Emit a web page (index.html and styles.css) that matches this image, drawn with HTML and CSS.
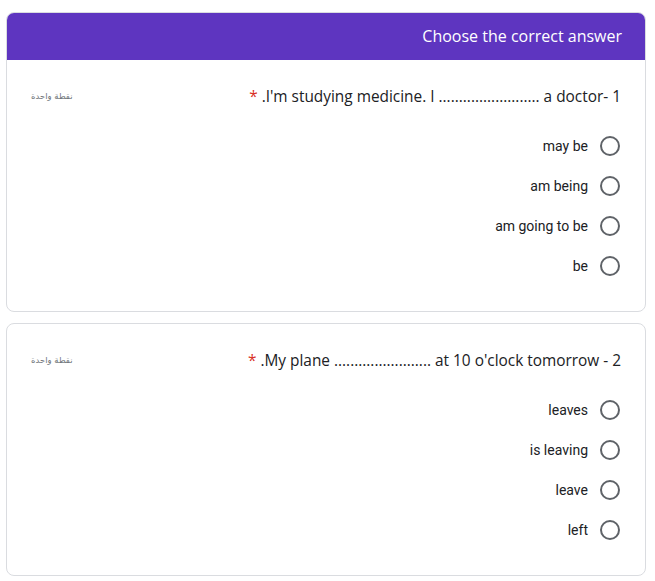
FILE: index.html
```html
<!DOCTYPE html>
<html lang="ar">
<head>
<meta charset="utf-8">
<title>Choose the correct answer</title>
<link rel="stylesheet" href="styles.css">
</head>
<body>
<div class="form">
  <section class="card card-first">
    <header class="card-header">Choose the correct answer</header>
    <div class="card-body">
      <div class="question-row">
        <span class="points">نقطة واحدة</span>
        <span class="question"><span class="req">*</span> .I'm studying medicine. I ......................... a doctor- 1</span>
      </div>
      <div class="options">
        <label class="option"><span class="opt-text">may be</span><span class="radio"></span></label>
        <label class="option"><span class="opt-text">am being</span><span class="radio"></span></label>
        <label class="option"><span class="opt-text">am going to be</span><span class="radio"></span></label>
        <label class="option"><span class="opt-text">be</span><span class="radio"></span></label>
      </div>
    </div>
  </section>
  <section class="card">
    <div class="card-body">
      <div class="question-row">
        <span class="points">نقطة واحدة</span>
        <span class="question"><span class="req">*</span> .My plane ........................ at 10 o'clock tomorrow - 2</span>
      </div>
      <div class="options">
        <label class="option"><span class="opt-text">leaves</span><span class="radio"></span></label>
        <label class="option"><span class="opt-text">is leaving</span><span class="radio"></span></label>
        <label class="option"><span class="opt-text">leave</span><span class="radio"></span></label>
        <label class="option"><span class="opt-text">left</span><span class="radio"></span></label>
      </div>
    </div>
  </section>
</div>
</body>
</html>
```
FILE: styles.css
```css
html, body {
  margin: 0;
  padding: 0;
  background: #ffffff;
}
body {
  font-family: "Open Sans", Roboto, Arial, sans-serif;
  color: #202124;
}
.form {
  margin: 12px 9px 0 6px;
  display: flex;
  flex-direction: column;
  gap: 11px;
}
.card {
  border: 1px solid #dadce0;
  border-radius: 8px;
  background: #fff;
  overflow: hidden;
}
.card-header {
  background: #5e35c0;
  color: #ffffff;
  height: 48px;
  margin: -1px -1px 0 -1px;
  padding: 0 24px;
  display: flex;
  align-items: center;
  justify-content: flex-end;
  font-size: 16px;
  font-family: "Open Sans", Roboto, sans-serif;
}
.card-body {
  padding: 24px 24px 25px 24px;
}
.question-row {
  display: flex;
  justify-content: space-between;
  align-items: center;
  height: 24px;
}
.points {
  font-family: "DejaVu Sans", "Noto Sans", sans-serif;
  font-size: 8.5px;
  color: #70757a;
  direction: rtl;
}
.question {
  font-size: 15.4px;
  color: #202124;
  white-space: nowrap;
}
.req {
  color: #d93025;
}
.options {
  margin-top: 18px;
  display: flex;
  flex-direction: column;
}
.option {
  height: 40px;
  display: flex;
  align-items: center;
  justify-content: flex-end;
  gap: 12px;
}
.opt-text {
  font-family: Roboto, Arial, sans-serif;
  font-size: 14px;
  color: #202124;
}
.radio {
  width: 16px;
  height: 16px;
  border: 2px solid #5f6368;
  border-radius: 50%;
  margin-right: 1px;
}
```
